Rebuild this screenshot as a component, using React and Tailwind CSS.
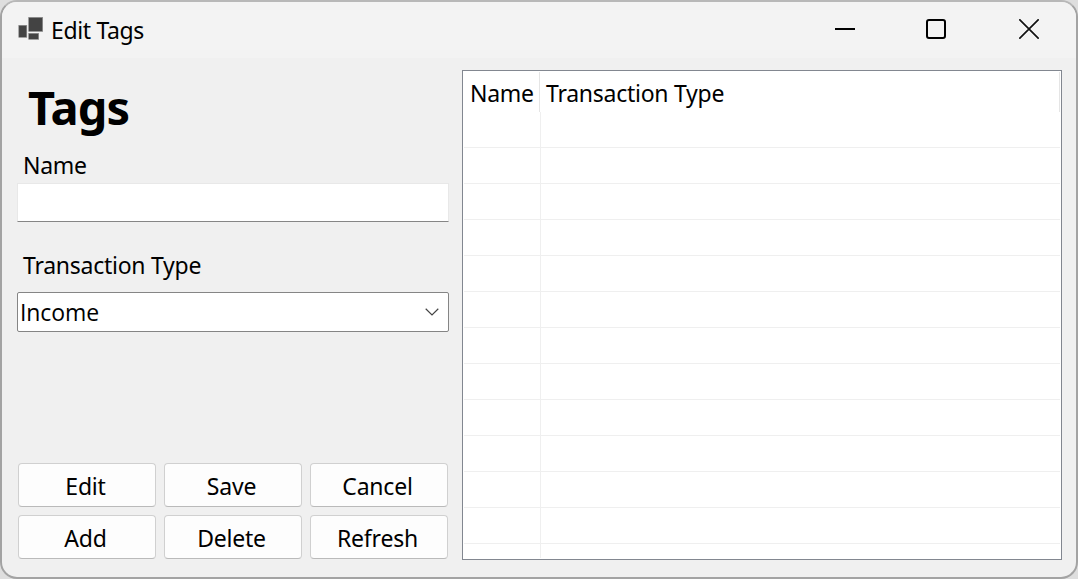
import React from "react";

function AppIcon() {
  return (
    <svg width="25" height="23" viewBox="0 0 25 23" className="shrink-0">
      <g fill="#434343" stroke="#8c8c8c" strokeWidth="0.6">
        <rect x="0.8" y="8.3" width="8" height="12" />
        <rect x="10.7" y="0.4" width="14" height="14" />
        <rect x="10.7" y="16.3" width="10" height="6" />
      </g>
    </svg>
  );
}

function TitleBar() {
  return (
    <header className="flex h-14 shrink-0 items-start bg-[#f3f3f3] pl-[16px]">
      <div className="pt-[15px]">
        <AppIcon />
      </div>
      <h1 className="ml-[8px] mt-[8px] grow text-[23px] leading-[40px] tracking-[-0.35px]">Edit Tags</h1>
      <div className="flex">
        <button aria-label="Minimize" className="flex h-[54px] w-[92px] items-center justify-center">
          <svg width="20" height="20" viewBox="0 0 20 20"><path d="M0 10H20" stroke="#000" strokeWidth="2" /></svg>
        </button>
        <button aria-label="Maximize" className="flex h-[54px] w-[90px] items-center justify-center">
          <svg width="20" height="20" viewBox="0 0 20 20"><rect x="1" y="1" width="18" height="18" rx="2" fill="none" stroke="#000" strokeWidth="2" /></svg>
        </button>
        <button aria-label="Close" className="flex h-[54px] w-[95px] items-center justify-center">
          <svg width="20" height="20" viewBox="0 0 20 20"><path d="M0.3 0.3L19.7 19.7M19.7 0.3L0.3 19.7" stroke="#111" strokeWidth="1.7" /></svg>
        </button>
      </div>
    </header>
  );
}

const actions = ["Edit", "Save", "Cancel", "Add", "Delete", "Refresh"];
const rows = Array.from({ length: 12 });

function TagForm() {
  return (
    <form className="flex w-[432px] flex-col pt-[20px]">
      <h2 className="ml-[11px] h-[60px] text-[47px] font-bold leading-[58px] tracking-[-0.9px]">Tags</h2>
      <label htmlFor="name" className="ml-[6px] mt-[7px] h-[40px] text-[23px] leading-[40px] tracking-[-0.3px]">Name</label>
      <input id="name" className="-mt-[2px] h-[39px] w-[432px] border border-[#e8e8e8] border-b-[#868686] bg-white outline-none" />
      <label className="ml-[6px] mt-[23px] h-[40px] text-[23px] leading-[40px] tracking-[-0.26px]">Transaction Type</label>
      <div className="mt-[7px] flex h-[40px] items-center justify-between rounded-[2px] border border-[#858585] bg-white pl-[2px] pr-[9px]">
        <span className="font-['Open_Sans',sans-serif] text-[23px] leading-[38px] tracking-[-0.1px]">Income</span>
        <svg width="14" height="8" viewBox="0 0 14 8"><path d="M0.7 0.8L7 7L13.3 0.8" fill="none" stroke="#444" strokeWidth="1.2" /></svg>
      </div>
      <div className="ml-px mt-[131px] grid grid-cols-[138px_138px_138px] gap-2">
        {actions.map((a) => (
          <button type="button" key={a} className="h-11 rounded-[4px] border border-[#d0d0d0] border-b-[#bababa] bg-[#fdfdfd] pr-[3px] pt-[2px] text-[23px] leading-[40px] tracking-[-0.2px]">
            {a}
          </button>
        ))}
      </div>
    </form>
  );
}

function TagTable() {
  return (
    <section className="ml-[13px] mt-[12px] flex h-[490px] w-[600px] flex-col overflow-hidden border border-[#828790] bg-white p-px">
      <div className="flex h-[40px] shrink-0 text-[23px] leading-[42px] tracking-[-0.26px]">
        <div className="w-[76px] border-r border-[#e5e5e5] pl-[6px]">Name</div>
        <div className="grow border-r border-[#e5e5e5] pl-[6px]">Transaction Type</div>
      </div>
      {rows.map((_, i) => (
        <div key={i} className="flex h-9 shrink-0 border-b border-[#efefef]">
          <div className="w-[77px] border-r border-[#efefef]" />
        </div>
      ))}
      <div className="w-[77px] grow border-r border-[#efefef]" />
    </section>
  );
}

export default function App() {
  return (
    <div className="h-[579px] w-[1078px] overflow-hidden bg-[#dedede] font-['Noto_Sans','Open_Sans',sans-serif] text-black">
      <div className="flex h-full w-full flex-col overflow-hidden rounded-[17px] border-2 border-[#a3a3a3] border-t-[#b8b8b8] bg-[#f0f0f0]">
        <TitleBar />
        <main className="flex grow pl-[15px]">
          <TagForm />
          <TagTable />
        </main>
      </div>
    </div>
  );
}
